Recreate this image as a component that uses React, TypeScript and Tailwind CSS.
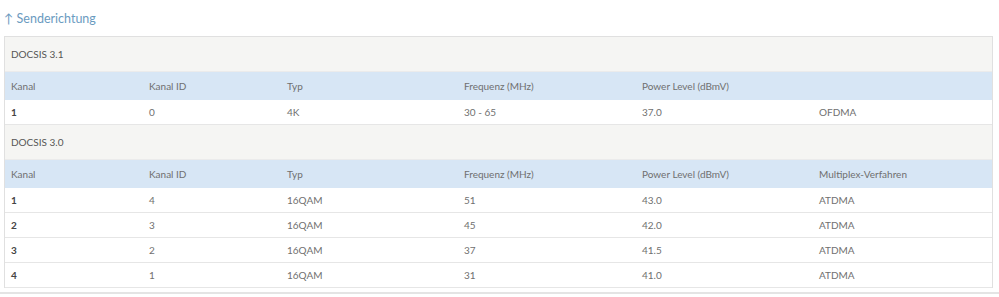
const cols = "grid grid-cols-[138px_138px_177px_178px_177px_1fr] px-[6px]";

type Row = { kanal: string; id: string; typ: string; freq: string; power: string; mod: string };

const d31: Row[] = [{ kanal: "1", id: "0", typ: "4K", freq: "30 - 65", power: "37.0", mod: "OFDMA" }];

const d30: Row[] = [
  { kanal: "1", id: "4", typ: "16QAM", freq: "51", power: "43.0", mod: "ATDMA" },
  { kanal: "2", id: "3", typ: "16QAM", freq: "45", power: "42.0", mod: "ATDMA" },
  { kanal: "3", id: "2", typ: "16QAM", freq: "37", power: "41.5", mod: "ATDMA" },
  { kanal: "4", id: "1", typ: "16QAM", freq: "31", power: "41.0", mod: "ATDMA" },
];

function Section({ title, rows, lastHeader }: { title: string; rows: Row[]; lastHeader: string }) {
  return (
    <div>
      <div className="h-[35px] flex items-center px-[6px] bg-[#f5f5f3] border-b border-[#ebebeb] text-[#555]">{title}</div>
      <div className={`${cols} h-[28px] items-center bg-[#d7e6f5]`}>
        <div>Kanal</div>
        <div>Kanal ID</div>
        <div>Typ</div>
        <div>Frequenz (MHz)</div>
        <div>Power Level (dBmV)</div>
        <div>{lastHeader}</div>
      </div>
      {rows.map((r) => (
        <div key={r.kanal} className={`${cols} h-[25px] items-center border-b border-[#e6e6e6] bg-white`}>
          <div className="font-bold text-[#444]">{r.kanal}</div>
          <div>{r.id}</div>
          <div>{r.typ}</div>
          <div>{r.freq}</div>
          <div>{r.power}</div>
          <div>{r.mod}</div>
        </div>
      ))}
    </div>
  );
}

export default function App() {
  return (
    <div className="w-[999px] h-[297px] bg-white text-[10px] text-[#6f6f6f] font-['Lato',sans-serif] overflow-hidden">
      <div className="pl-[4px] pt-[10px] h-[36px] text-[12.5px] text-[#6b9bbf]">↑ Senderichtung</div>
      <div className="ml-[4px] w-[989px] border border-[#e0e0e0] border-b-0">
        <Section title="DOCSIS 3.1" rows={d31} lastHeader="" />
        <Section title="DOCSIS 3.0" rows={d30} lastHeader="Multiplex-Verfahren" />
      </div>
      <div className="mt-[4px] h-[2px] bg-[#e4e4e4]" />
    </div>
  );
}
